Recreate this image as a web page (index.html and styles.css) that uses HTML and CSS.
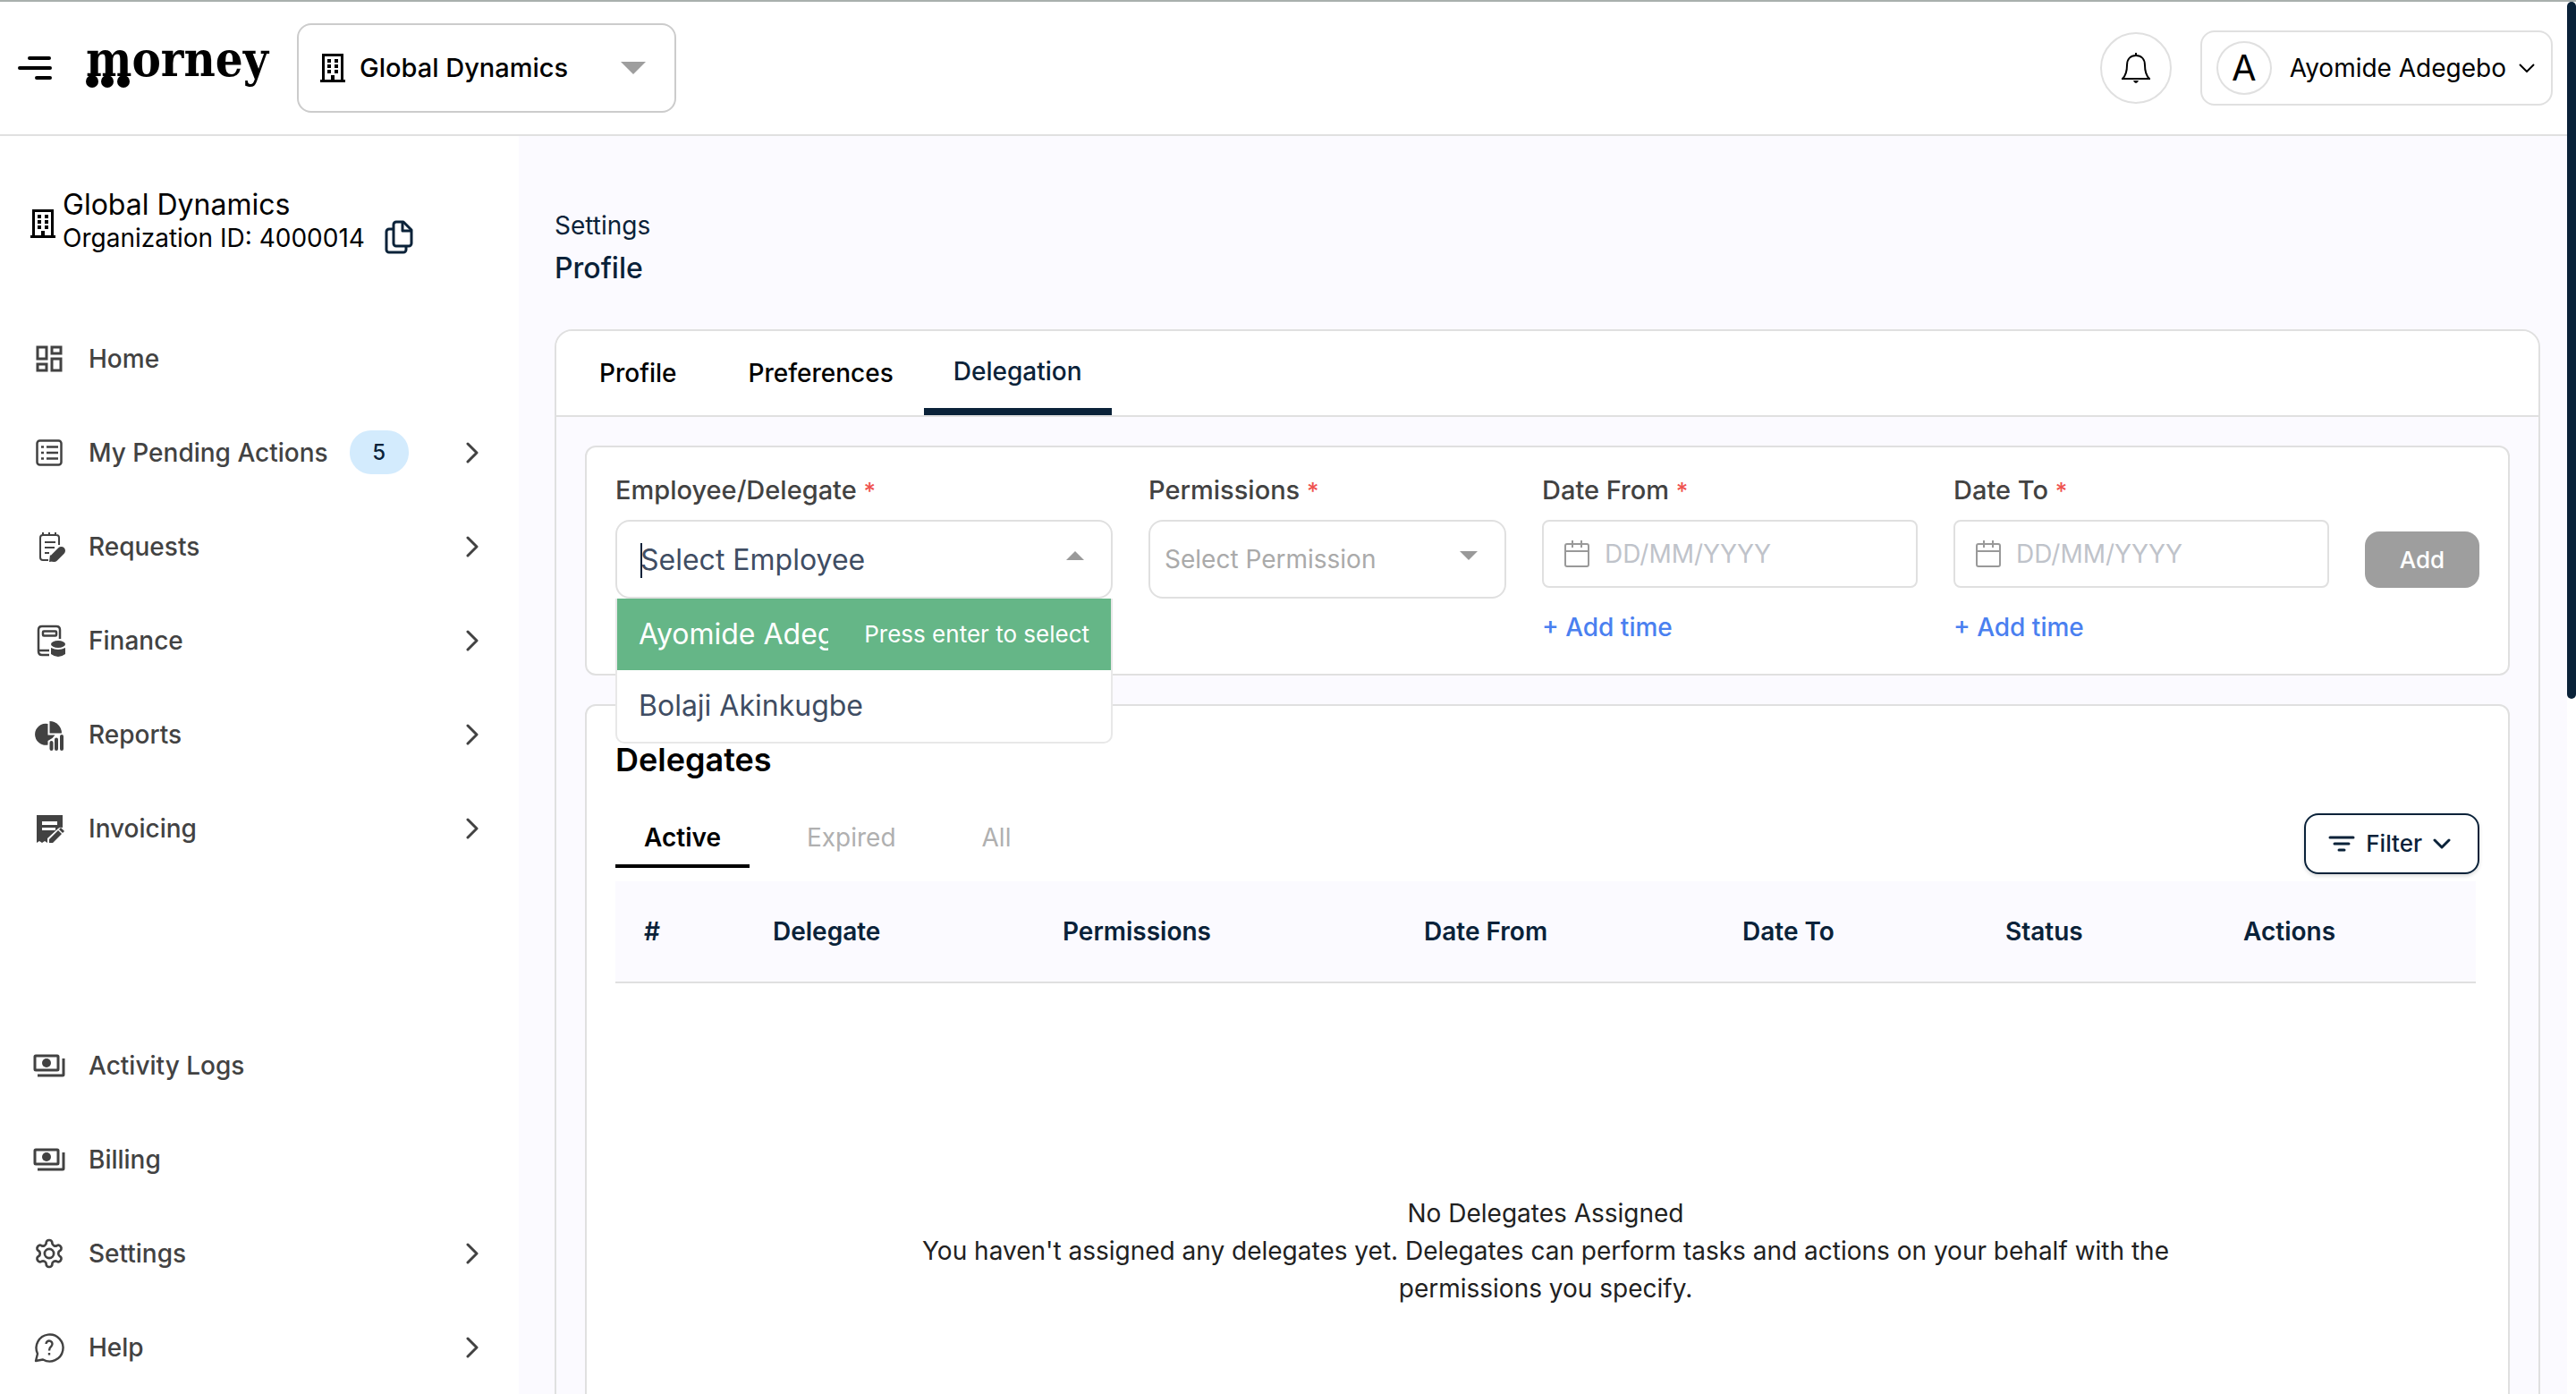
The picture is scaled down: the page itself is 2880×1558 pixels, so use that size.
FILE: index.html
```html
<!DOCTYPE html>
<html lang="en">

<head>
    <meta charset="UTF-8">
    <meta name="viewport" content="width=device-width, initial-scale=1.0">
    <title>Morney | Delegation</title>
    <link rel="stylesheet" href="styles.css">
</head>

<body>
    <!-- Shared icons -->
    <svg class="sprite" aria-hidden="true">
        <symbol id="building" viewBox="0 0 28 32">
            <path d="M3.5 31V1.5h21V31" fill="none" stroke="currentColor" stroke-width="3" />
            <path d="M0 29h28v3H0zM8 6h4v4H8zM16 6h4v4h-4zM8 12h4v4H8zM16 12h4v4h-4zM8 18h4v4H8zM16 18h4v4h-4zM12 24h4v6h-4z" fill="currentColor" />
        </symbol>
        <symbol id="chevron" viewBox="0 0 16 24">
            <path d="M3 2l10 10L3 22" fill="none" stroke="currentColor" stroke-width="3" stroke-linecap="round" stroke-linejoin="round" />
        </symbol>
        <symbol id="cash" viewBox="0 0 40 40">
            <rect x="4" y="9" width="26" height="16" rx="1" fill="none" stroke="currentColor" stroke-width="3" />
            <circle cx="17" cy="17" r="5" fill="currentColor" />
            <path d="M36 12v18q0 1-1 1H7" fill="none" stroke="currentColor" stroke-width="3" />
        </symbol>
        <symbol id="calendar" viewBox="0 0 30 32">
            <path d="M4 5h22a2 2 0 0 1 2 2v21a2 2 0 0 1-2 2H4a2 2 0 0 1-2-2V7a2 2 0 0 1 2-2zM2 13h26M10 1v8M20 1v8" fill="none" stroke="currentColor" stroke-width="2" />
        </symbol>
    </svg>

    <header class="topbar">
        <button class="menu-btn" type="button" aria-label="Toggle menu">
            <svg width="38" height="30" viewBox="0 0 38 30" fill="none" stroke="#000" stroke-width="4" stroke-linecap="round">
                <path d="M13 4h22M2 15h34M21 26h15" />
            </svg>
        </button>
        <a class="logo" href="#">morney
            <svg class="logo-dots" width="50" height="14" viewBox="0 0 50 14">
                <circle cx="7" cy="7" r="7" /><circle cx="24" cy="7" r="7" /><circle cx="42" cy="7" r="7" />
            </svg>
        </a>
        <div class="org-select">
            <svg width="28" height="32"><use href="#building" /></svg>
            <select aria-label="Organization">
                <option>Global Dynamics</option>
            </select>
            <svg width="28" height="14" viewBox="0 0 28 14"><path d="M0 0h28L14 14z" fill="#9e9e9e" /></svg>
        </div>
        <button class="bell" type="button" aria-label="Notifications">
            <svg width="34" height="38" viewBox="0 0 34 38">
                <path d="M2 31c4-4 5-8 5-15C7 9 11 5 17 5s10 4 10 11c0 7 1 11 5 15z" fill="none" stroke="#000" stroke-width="2" stroke-linejoin="round" />
                <path d="M1 30h32v2H1zM14 33h6q-1 3-3 3t-3-3zM16 2h2v4h-2z" />
            </svg>
        </button>
        <button class="account" type="button">
            <span class="avatar">A</span>
            <span>Ayomide Adegebo</span>
            <svg width="18" height="10" viewBox="0 0 18 10"><path d="M1 1l8 8 8-8" fill="none" stroke="#000" stroke-width="2" /></svg>
        </button>
    </header>

    <div class="layout">
        <aside class="sidebar">
            <div class="org">
                <svg class="org-icon" width="28" height="32"><use href="#building" /></svg>
                <div>
                    <div class="org-name">Global Dynamics</div>
                    <div class="org-id">Organization ID: 4000014</div>
                </div>
                <button class="copy" type="button" aria-label="Copy organization ID">
                    <svg width="32" height="38" viewBox="0 0 32 38" fill="none" stroke="#0a2239" stroke-width="3" stroke-linejoin="round">
                        <path d="M13 2h8l9 9v15a3 3 0 0 1-3 3H13a3 3 0 0 1-3-3V5a3 3 0 0 1 3-3z" />
                        <path d="M20 3v9h9M10 10H5a3 3 0 0 0-3 3v20a3 3 0 0 0 3 3h16a3 3 0 0 0 3-3v-3" />
                    </svg>
                </button>
            </div>

            <nav class="nav">
                <a href="#">
                    <svg class="icon" viewBox="0 0 40 40" fill="none" stroke="currentColor" stroke-width="3">
                        <path d="M7 7h10v13H7zM23 7h10v7H23zM7 26h10v7H7zM23 20h10v13H23z" />
                    </svg>
                    Home
                </a>
                <a href="#">
                    <svg class="icon" viewBox="0 0 40 40" fill="none" stroke="currentColor" stroke-width="2.5">
                        <rect x="6.5" y="6.5" width="27" height="27" rx="3" />
                        <path d="M17 13.5h13M17 20h13M17 26.5h13M11 13.5h3M11 20h3M11 26.5h3" />
                    </svg>
                    My Pending Actions
                    <span class="badge">5</span>
                    <svg class="chev"><use href="#chevron" /></svg>
                </a>
                <a href="#">
                    <svg class="icon" viewBox="0 0 40 40" fill="none" stroke="currentColor" stroke-width="2">
                        <path d="M31 18V10q0-3-3-3H13q-3 0-3 3v22q0 3 3 3h6M13 4v3M20 4v3M27 4v3M15 15h12M15 21h11M15 27h5" />
                        <path d="M25.5 32.5L33.5 24.5" stroke-width="9" stroke-linecap="round" />
                        <path d="M21 29l-1 8 7-1z" fill="currentColor" stroke="none" />
                    </svg>
                    Requests
                    <svg class="chev"><use href="#chevron" /></svg>
                </a>
                <a href="#">
                    <svg class="icon" viewBox="0 0 40 40" fill="none" stroke="currentColor" stroke-width="2.5">
                        <path d="M32 18V8q0-4-4-4H12Q8 4 8 8v24q0 4 4 4h8M9 31h11" />
                        <rect x="13" y="9.5" width="15" height="5" rx="1" />
                        <path d="M22 28q8 4 16 0v7q-8 6-16 0z" fill="currentColor" stroke="none" />
                        <ellipse cx="30" cy="24" rx="8" ry="4" fill="currentColor" stroke="none" />
                    </svg>
                    Finance
                    <svg class="chev"><use href="#chevron" /></svg>
                </a>
                <a href="#">
                    <svg class="icon" viewBox="0 0 40 40" fill="currentColor">
                        <path d="M18.5 8A12 12 0 1 0 18.5 31.5V27l5-3 3-3.5h-8z" />
                        <path d="M20.5 5A13.5 13.5 0 0 1 34 18.5H20.5z" />
                        <path d="M22.5 29v7M28 25.5V36M34 22v14" stroke="currentColor" stroke-width="4" stroke-linecap="round" />
                    </svg>
                    Reports
                    <svg class="chev"><use href="#chevron" /></svg>
                </a>
                <a href="#">
                    <svg class="icon" viewBox="0 0 40 40" fill="currentColor">
                        <path d="M6 5h29v14q-3-1-5 1L18 31v5l-3-2-3 2-3-2-3 2z" />
                        <path d="M12 12h17v4H12zM12 19h15v3H12z" fill="#fff" />
                        <path d="M20 36v-4l10-10 4 4-10 10zM31 21l2-2 4 4-2 2z" />
                    </svg>
                    Invoicing
                    <svg class="chev"><use href="#chevron" /></svg>
                </a>
            </nav>

            <nav class="nav nav-bottom">
                <a href="#"><svg class="icon"><use href="#cash" /></svg>Activity Logs</a>
                <a href="#"><svg class="icon"><use href="#cash" /></svg>Billing</a>
                <a href="#">
                    <svg class="icon" viewBox="-1.33 -1.33 26.66 26.66" fill="none" stroke="currentColor" stroke-width="1.8">
                        <path d="M12.22 2h-.44a2 2 0 0 0-2 2v.18a2 2 0 0 1-1 1.73l-.43.25a2 2 0 0 1-2 0l-.15-.08a2 2 0 0 0-2.73.73l-.22.38a2 2 0 0 0 .73 2.73l.15.1a2 2 0 0 1 1 1.72v.51a2 2 0 0 1-1 1.74l-.15.09a2 2 0 0 0-.73 2.73l.22.38a2 2 0 0 0 2.73.73l.15-.08a2 2 0 0 1 2 0l.43.25a2 2 0 0 1 1 1.73V20a2 2 0 0 0 2 2h.44a2 2 0 0 0 2-2v-.18a2 2 0 0 1 1-1.73l.43-.25a2 2 0 0 1 2 0l.15.08a2 2 0 0 0 2.73-.73l.22-.39a2 2 0 0 0-.73-2.73l-.15-.08a2 2 0 0 1-1-1.74v-.5a2 2 0 0 1 1-1.74l.15-.09a2 2 0 0 0 .73-2.73l-.22-.38a2 2 0 0 0-2.73-.73l-.15.08a2 2 0 0 1-2 0l-.43-.25a2 2 0 0 1-1-1.73V4a2 2 0 0 0-2-2z" />
                        <circle cx="12" cy="12" r="3.4" />
                    </svg>
                    Settings
                    <svg class="chev"><use href="#chevron" /></svg>
                </a>
                <a href="#">
                    <svg class="icon" viewBox="0 0 40 40" fill="none" stroke="currentColor" stroke-width="2.4">
                        <path d="M5 35l2-8A15 15 0 1 1 13 33.5z" stroke-linejoin="round" />
                        <path d="M16.5 16a3.5 3.5 0 1 1 6 2.5q-2.5 2-2.5 5M20 26v2.5" />
                    </svg>
                    Help
                    <svg class="chev"><use href="#chevron" /></svg>
                </a>
            </nav>
        </aside>

        <main class="content">
            <div class="crumb">Settings</div>
            <h1>Profile</h1>

            <section class="panel">
                <div class="tabs">
                    <button type="button">Profile</button>
                    <button type="button">Preferences</button>
                    <button type="button" class="active">Delegation</button>
                </div>

                <form class="card delegate-form">
                    <div class="field">
                        <label for="employee">Employee/Delegate <span class="req">*</span></label>
                        <div class="combo">
                            <input id="employee" class="box" type="text" placeholder="Select Employee">
                            <span class="caret"></span>
                            <svg class="arrow" viewBox="0 0 20 10"><path d="M0 10h20L10 0z" /></svg>
                            <ul class="options">
                                <li class="highlight"><span class="option-name">Ayomide Adegebo</span><span class="hint">Press enter to select</span></li>
                                <li>Bolaji Akinkugbe</li>
                            </ul>
                        </div>
                    </div>
                    <div class="field">
                        <label for="permission">Permissions <span class="req">*</span></label>
                        <div class="combo">
                            <select id="permission" class="box">
                                <option>Select Permission</option>
                            </select>
                            <svg class="arrow" viewBox="0 0 20 10"><path d="M0 0h20L10 10z" /></svg>
                        </div>
                    </div>
                    <div class="field">
                        <label for="from">Date From <span class="req">*</span></label>
                        <div class="date">
                            <svg width="30" height="32"><use href="#calendar" /></svg>
                            <input id="from" type="text" placeholder="DD/MM/YYYY">
                        </div>
                        <a class="add-time" href="#">+ Add time</a>
                    </div>
                    <div class="field">
                        <label for="to">Date To <span class="req">*</span></label>
                        <div class="date">
                            <svg width="30" height="32"><use href="#calendar" /></svg>
                            <input id="to" type="text" placeholder="DD/MM/YYYY">
                        </div>
                        <a class="add-time" href="#">+ Add time</a>
                    </div>
                    <button class="add-btn" type="button">Add</button>
                </form>

                <section class="card delegates">
                    <h2>Delegates</h2>
                    <div class="toolbar">
                        <div class="status-tabs">
                            <button type="button" class="active">Active</button>
                            <button type="button">Expired</button>
                            <button type="button">All</button>
                        </div>
                        <button class="filter-btn" type="button">
                            <svg width="30" height="20" viewBox="0 0 30 20" fill="none" stroke="currentColor" stroke-width="3" stroke-linecap="round"><path d="M2 3h26M7 10h16M12 17h6" /></svg>
                            Filter
                            <svg width="20" height="12" viewBox="0 0 20 12" fill="none" stroke="currentColor" stroke-width="3" stroke-linecap="round" stroke-linejoin="round"><path d="M2 2l8 8 8-8" /></svg>
                        </button>
                    </div>
                    <table>
                        <thead>
                            <tr>
                                <th>#</th>
                                <th>Delegate</th>
                                <th>Permissions</th>
                                <th>Date From</th>
                                <th>Date To</th>
                                <th>Status</th>
                                <th>Actions</th>
                            </tr>
                        </thead>
                    </table>
                    <div class="empty">
                        <p>No Delegates Assigned</p>
                        <p>You haven't assigned any delegates yet. Delegates can perform tasks and actions on your behalf with the permissions you specify.</p>
                    </div>
                </section>
            </section>
        </main>
    </div>

    <div class="scroll-thumb"></div>
</body>
</html>
```

FILE: styles.css
```css
* {
    box-sizing: border-box;
}

body {
    font-family: Inter, 'Liberation Sans', sans-serif;
    font-size: 28px;
    line-height: 40px;
    color: #000;
    background: #fff;
    margin: 0;
    height: 100vh;
    display: flex;
    flex-direction: column;
    overflow: hidden;
    border-top: 2px solid #a9b0ad;
}

button,
input,
select {
    font: inherit;
    color: inherit;
    background: none;
    border: none;
    padding: 0;
    margin: 0;
    outline: none;
}

select {
    appearance: none;
}

button {
    cursor: pointer;
}

a {
    color: inherit;
    text-decoration: none;
}

svg {
    display: block;
    flex-shrink: 0;
}

.sprite {
    position: absolute;
    width: 0;
    height: 0;
}

/* Top bar */
.topbar {
    display: flex;
    align-items: center;
    padding: 24px 26px 24px 20px;
    border-bottom: 2px solid #e0e0e0;
    flex-shrink: 0;
}

.logo {
    position: relative;
    margin-left: 38px;
    margin-bottom: 20px;
    width: 236px;
    font-family: 'DejaVu Serif Condensed', 'DejaVu Serif', serif;
    font-weight: bold;
    font-size: 54px;
    line-height: 60px;
}

.logo-dots {
    position: absolute;
    left: 0;
    top: 48px;
}

.org-select {
    display: flex;
    align-items: center;
    gap: 16px;
    width: 424px;
    height: 100px;
    padding: 0 32px 0 24px;
    border: 2px solid #ccc;
    border-radius: 16px;
    font-size: 29px;
    font-weight: 500;
}

.org-select select {
    flex: 1;
}

.bell {
    display: flex;
    align-items: center;
    justify-content: center;
    width: 80px;
    height: 80px;
    margin-left: auto;
    border: 2px solid #e0e0e0;
    border-radius: 50%;
}

.account {
    display: flex;
    align-items: center;
    height: 84px;
    margin-left: 32px;
    padding: 0 18px 0 16px;
    border: 2px solid #e0e0e0;
    border-radius: 16px;
    gap: 14px;
}

.avatar {
    width: 62px;
    height: 60px;
    margin-right: 6px;
    border: 2px solid #e0e0e0;
    border-radius: 50%;
    font-size: 40px;
    line-height: 56px;
}

/* Sidebar */
.layout {
    display: flex;
    flex: 1;
    min-height: 0;
}

.sidebar {
    width: 580px;
    flex-shrink: 0;
    padding-top: 58px;
}

.org {
    display: flex;
    align-items: center;
    gap: 8px;
    padding-left: 34px;
    margin-bottom: 64px;
    line-height: 36px;
}

.org-icon {
    margin-top: 6px;
}

.org-name {
    font-size: 32px;
    line-height: 38px;
}

.copy {
    align-self: flex-end;
    margin-left: 14px;
}

.nav a {
    display: flex;
    align-items: center;
    gap: 24px;
    height: 105px;
    padding: 0 44px 0 35px;
    font-weight: 500;
    color: #424242;
}

.nav-bottom {
    margin-top: 160px;
}

.icon {
    width: 40px;
    height: 40px;
}

.chev {
    width: 16px;
    height: 24px;
    margin-left: auto;
}

.badge {
    width: 66px;
    height: 49px;
    border-radius: 24px;
    background: #d3ebfd;
    color: #0a2239;
    font-size: 24px;
    line-height: 49px;
    text-align: center;
}

/* Content */
.content {
    flex: 1;
    min-width: 0;
    margin-right: 10px;
    padding: 80px 30px 0 40px;
    background: #fbfaff;
    color: #0a2239;
    overflow: hidden;
}

h1 {
    margin: 8px 0 48px;
    font-size: 32px;
    line-height: 40px;
    font-weight: 500;
}

.panel {
    border: 2px solid #e0e0e0;
    border-radius: 20px 20px 0 0;
    padding-bottom: 32px;
}

.tabs {
    display: flex;
    height: 96px;
    padding-left: 14px;
    background: #fff;
    border-bottom: 2px solid #e0e0e0;
    border-radius: 18px 18px 0 0;
    color: #000;
}

.tabs button {
    padding: 0 34px;
    font-weight: 500;
}

.tabs button:first-child {
    margin-right: 12px;
}

.tabs .active {
    padding: 4px 33px 0;
    color: #0a2239;
    border-bottom: 8px solid #0a2239;
}

.card {
    margin: 32px 32px 0;
    padding: 30px 32px 32px;
    background: #fff;
    border: 2px solid #e0e0e0;
    border-radius: 12px;
}

.delegate-form {
    display: grid;
    grid-template-columns: 556fr 400fr 420fr 420fr 128fr;
    column-gap: 40px;
    align-items: start;
}

.field {
    min-width: 0;
}

.field label {
    display: block;
    margin-bottom: 14px;
    font-size: 29px;
    line-height: 36px;
    font-weight: 500;
    color: #424242;
}

.req {
    color: #ef5350;
    font-size: 26px;
}

.combo {
    position: relative;
}

.box {
    display: block;
    width: 100%;
    height: 88px;
    padding: 0 16px;
    border: 2px solid #e0e0e0;
    border-radius: 16px;
    color: #aaa;
}

#employee {
    padding: 0 26px;
    font-size: 32px;
}

#employee::placeholder {
    color: #3f4d63;
}

.caret {
    position: absolute;
    left: 28px;
    top: 26px;
    width: 2px;
    height: 39px;
    background: #0a2239;
}

.arrow {
    position: absolute;
    right: 32px;
    top: 35px;
    width: 20px;
    height: 10px;
    fill: #999;
}

.options {
    position: absolute;
    z-index: 2;
    top: 88px;
    left: 0;
    right: 0;
    margin: 0;
    padding: 0;
    list-style: none;
    background: #fff;
    border: 2px solid #e8e8e8;
    border-top: none;
    border-radius: 0 0 10px 10px;
    color: #3f4d63;
    font-size: 32px;
}

.options li {
    display: flex;
    align-items: center;
    gap: 40px;
    height: 80px;
    padding: 0 24px;
    white-space: nowrap;
}

.options .highlight {
    background: #65b687;
    color: #fff;
}

.option-name {
    flex: 1;
    overflow: hidden;
}

.hint {
    font-size: 26px;
}

.date {
    display: flex;
    align-items: center;
    gap: 16px;
    height: 76px;
    padding: 0 22px;
    border: 2px solid #e0e0e0;
    border-radius: 8px;
    color: #999;
}

.date input {
    flex: 1;
    min-width: 0;
}

.date input::placeholder {
    color: #bfc3ca;
}

.add-time {
    display: block;
    margin-top: 24px;
    font-weight: 500;
    color: #4a80f0;
}

.add-btn {
    height: 63px;
    margin-top: 64px;
    border-radius: 16px;
    background: #9e9e9e;
    color: #fff;
    font-size: 26px;
    font-weight: 500;
}

.delegates {
    padding-top: 36px;
}

h2 {
    margin: 0 0 36px;
    font-size: 36px;
    line-height: 48px;
    font-weight: 600;
    color: #000;
}

.toolbar {
    display: flex;
    align-items: center;
    justify-content: space-between;
    margin-bottom: 8px;
}

.status-tabs {
    display: flex;
    gap: 32px;
}

.status-tabs button {
    padding: 0 32px 10px;
    border-bottom: 4px solid transparent;
    color: #b0b0b0;
}

.status-tabs .active {
    border-color: #000;
    color: #000;
    font-weight: 600;
}

.filter-btn {
    display: flex;
    align-items: center;
    gap: 12px;
    height: 68px;
    padding: 0 30px 0 25px;
    border: 2px solid #0a2239;
    border-radius: 16px;
    box-shadow: 0 2px 4px rgba(0, 0, 0, 0.15);
    font-size: 26px;
    font-weight: 500;
}

table {
    width: calc(100% - 4px);
    table-layout: fixed;
    border-collapse: collapse;
}

th {
    height: 113px;
    padding: 0 32px;
    background: #fbfaff;
    border-bottom: 2px solid #e0e0e0;
    text-align: left;
    font-weight: 600;
}

th:nth-child(1) {
    width: 144px;
}

th:nth-child(2) {
    width: 324px;
}

th:nth-child(3) {
    width: 404px;
}

th:nth-child(4) {
    width: 356px;
}

th:nth-child(5) {
    width: 294px;
}

th:nth-child(6) {
    width: 266px;
}

.empty {
    max-width: 1440px;
    margin: 0 auto;
    padding: 236px 4px 320px 0;
    text-align: center;
    line-height: 42px;
    color: #212121;
}

.empty p {
    margin: 0;
}

/* Page scroll position */
.scroll-thumb {
    position: absolute;
    top: 2px;
    right: 0;
    width: 10px;
    height: 50vh;
    border-radius: 5px;
    background: #0a2239;
}
```
